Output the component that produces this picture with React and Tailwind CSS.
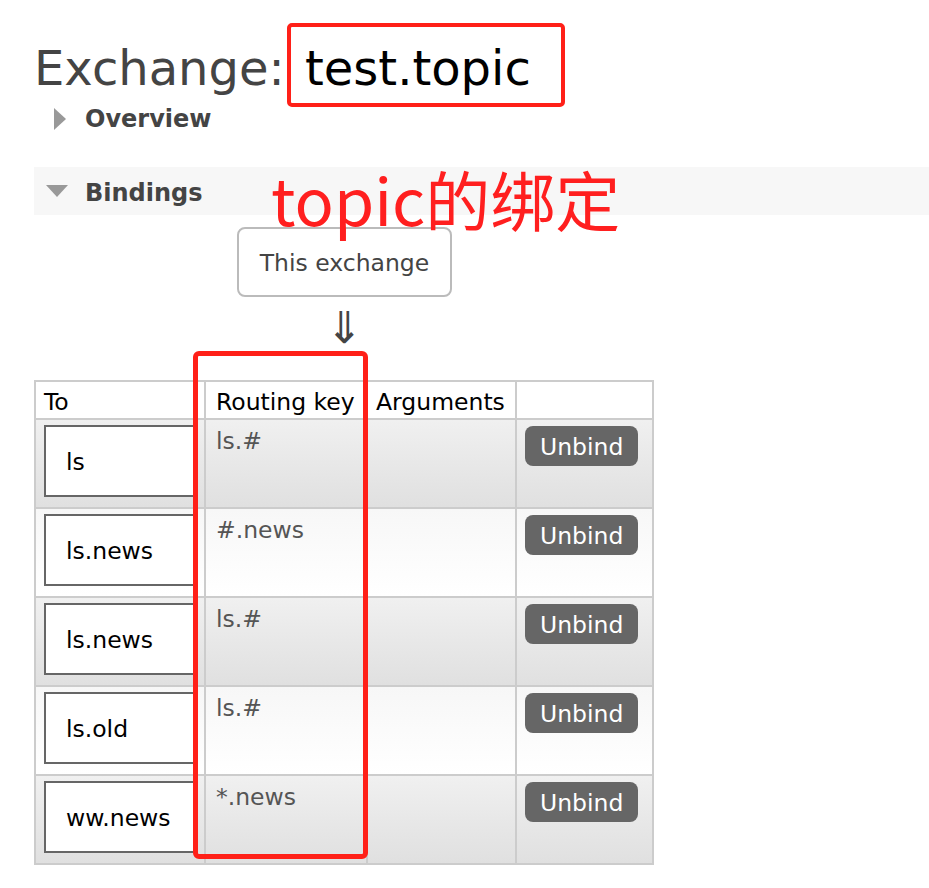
export default function App() {
  const rows = [
    { to: 'ls', key: 'ls.#' },
    { to: 'ls.news', key: '#.news' },
    { to: 'ls.news', key: 'ls.#' },
    { to: 'ls.old', key: 'ls.#' },
    { to: 'ww.news', key: '*.news' },
  ];
  return (
    <div className="relative w-[929px] h-[888px] bg-white overflow-hidden font-['DejaVu_Sans',sans-serif]">
      <div className="pl-[34px]">
        <h1 className="mt-[40px] h-[56px] text-[48px] leading-[56px] font-normal text-[#444] whitespace-nowrap">
          Exchange: <span className="ml-[5px] text-black">test.topic</span>
        </h1>
        <div className="mt-[8px] h-[30px] flex items-center">
          <div className="ml-[20px] w-0 h-0 border-y-[11px] border-y-transparent border-l-[12px] border-l-[#999]" />
          <span className="ml-[19px] text-[24px] leading-[30px] font-bold text-[#444]">Overview</span>
        </div>
        <div className="mt-[33px] h-[48px] bg-[#f7f7f7] flex items-center">
          <div className="ml-[12px] w-0 h-0 border-x-[11px] border-x-transparent border-t-[12px] border-t-[#999]" />
          <span className="ml-[17px] pt-[3px] text-[24px] leading-[30px] font-bold text-[#444]">Bindings</span>
        </div>
        <div className="mt-[12px] ml-[203px] w-[215px] h-[70px] border-2 border-[#bbb] rounded-[8px] flex items-center justify-center pt-[4px] text-[23.5px] text-[#444]">
          This exchange
        </div>
        <div className="ml-[203px] w-[215px] h-[83px] flex justify-center pt-[8px]">
          <span className="text-[44px] leading-[46px] text-[#444]">⇓</span>
        </div>
        <div className="grid grid-cols-[168px_160px_147px_135px] gap-[2px] p-[2px] bg-[#ccc] w-[620px] text-[23.5px]">
          <div className="bg-white h-[36px] leading-[36px] pt-[2px] pl-[8px] text-black">To</div>
          <div className="bg-white h-[36px] leading-[36px] pt-[2px] pl-[10px] text-black">Routing key</div>
          <div className="bg-white h-[36px] leading-[36px] pt-[2px] pl-[8px] text-black">Arguments</div>
          <div className="bg-white h-[36px]" />
          {rows.map((r, i) => {
            const bg = i % 2 === 0
              ? 'bg-linear-to-b from-[#f0f0f0] to-[#e0e0e0]'
              : 'bg-linear-to-b from-[#f7f7f7] to-[#ffffff]';
            return [
              <div key={`a${i}`} className={`${bg} h-[87px] pl-[8px] pt-[5px]`}>
                <div className="w-[152px] h-[72px] border-2 border-[#666] bg-white flex items-center pl-[20px] pt-[3px] text-black">
                  {r.to}
                </div>
              </div>,
              <div key={`b${i}`} className={`${bg} h-[87px] pl-[10px] pt-[7px] leading-[28px] text-[#555]`}>
                {r.key}
              </div>,
              <div key={`c${i}`} className={`${bg} h-[87px]`} />,
              <div key={`d${i}`} className={`${bg} h-[87px] pl-[8px] pt-[6px]`}>
                <div className="inline-block h-[40px] px-[15px] pt-[1px] rounded-[8px] bg-[#666] text-white leading-[40px]">Unbind</div>
              </div>,
            ];
          })}
        </div>
      </div>

      <div className="absolute left-[287px] top-[23px] w-[278px] h-[84px] border-[4px] border-[#ff2018] rounded-[5px]" />
      <div className="absolute left-[193px] top-[351px] w-[175px] h-[508px] border-[5px] border-[#ff2018] rounded-[6px]" />
      <div className="absolute left-[271px] top-[158px] text-[65px] leading-[80px] text-[#ff1f1f] whitespace-nowrap font-['Noto_Sans_CJK_SC',sans-serif]">
        topic的绑定
      </div>
    </div>
  );
}
